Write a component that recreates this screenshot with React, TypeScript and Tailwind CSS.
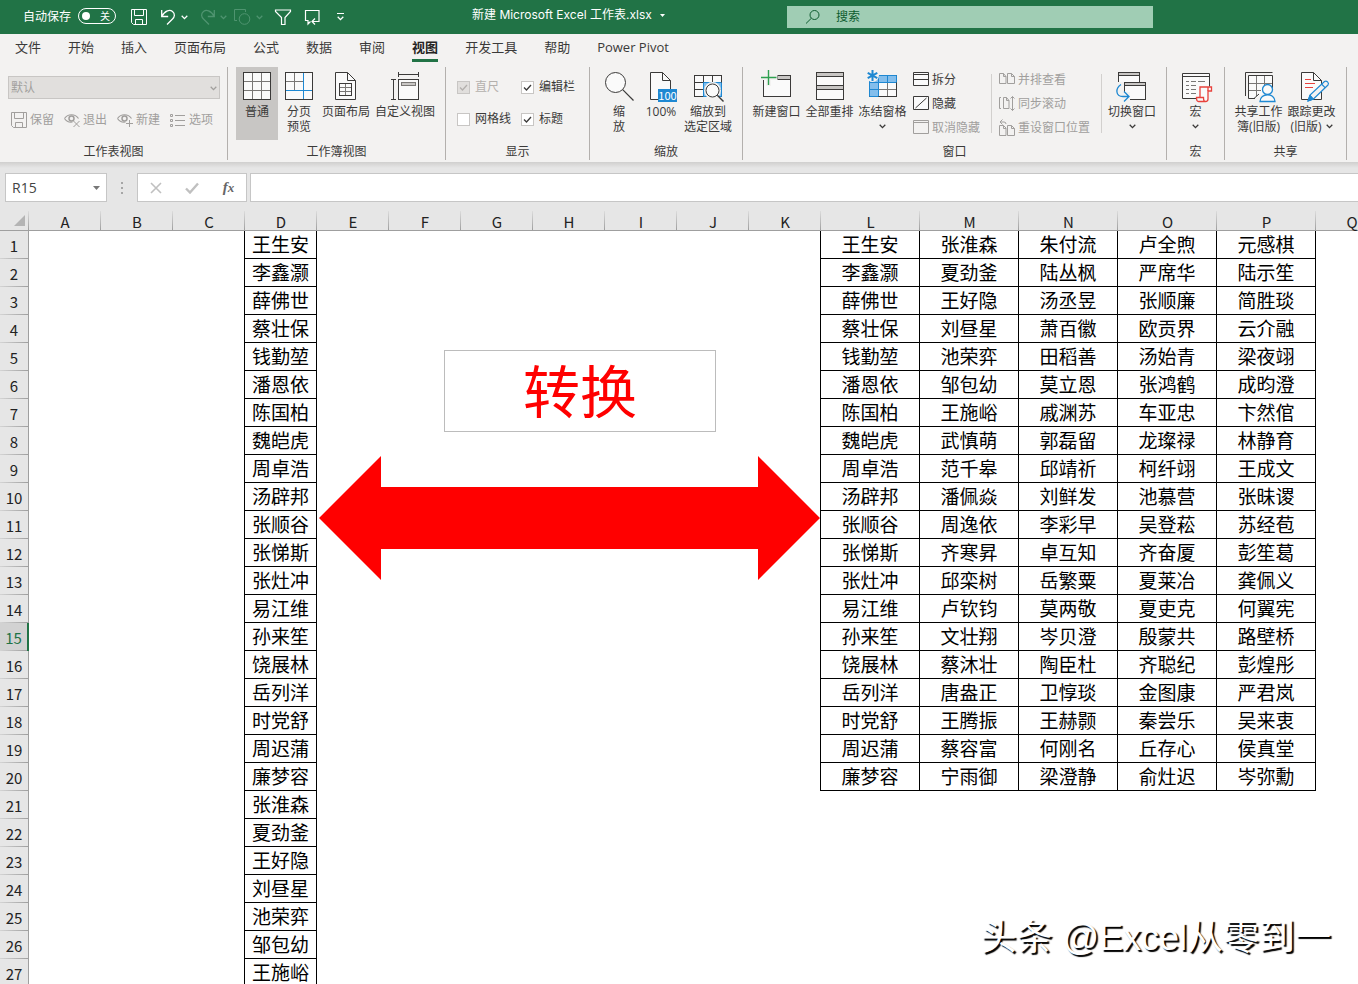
import React, { useState } from 'react';
import clsx from 'clsx';

const INK = '#3b3a39';
const BLUE = '#1e88d2';
const RED = '#e8413c';

type IconProps = { children: React.ReactNode };

const BigIcon = ({ children }: IconProps) => (
  <svg className="size-8 shrink-0 overflow-visible" viewBox="0 0 32 32" fill="none" stroke={INK} aria-hidden="true">
    {children}
  </svg>
);

const SmallIcon = ({ children }: IconProps) => (
  <svg className="size-4 shrink-0 overflow-visible" viewBox="0 0 16 16" fill="none" stroke="currentColor" aria-hidden="true">
    {children}
  </svg>
);

const Chevron = ({ className }: { className?: string }) => (
  <svg className={clsx('h-[5px] w-[7px] shrink-0', className)} viewBox="0 0 7 5" fill="none" stroke="currentColor" strokeWidth="1.3" aria-hidden="true">
    <path d="M0.7 0.8 3.5 3.6 6.3 0.8" />
  </svg>
);

const NormalIcon = () => (
  <BigIcon>
    <rect x="2.5" y="2.5" width="27" height="27" fill="#fafafa" />
    <path d="M11.5 3v26M20.5 3v26M3 11.5h26M3 20.5h26" stroke="#797775" />
    <rect x="2.5" y="2.5" width="27" height="27" />
  </BigIcon>
);

const PageBreakIcon = () => (
  <BigIcon>
    <rect x="2.5" y="2.5" width="27" height="27" fill="#fafafa" />
    <path d="M11.5 3v17M3 11.5h17" stroke="#797775" />
    <path d="M20.5 3v26M3 20.5h26" stroke={BLUE} />
  </BigIcon>
);

const PageLayoutIcon = () => (
  <BigIcon>
    <path d="M5.5 2.5h12l8 8v19h-20z" fill="#fafafa" />
    <path d="M17.5 2.5v8h8" />
    <rect x="9.5" y="13.5" width="12" height="12" />
    <path d="M15.5 14v11M10 17.5h11M10 21.5h11" stroke="#797775" />
  </BigIcon>
);

const CustomViewIcon = () => (
  <BigIcon>
    <path d="M9.5 4.5h20M9.5 2v5M29.5 2v5M4.5 9.5v20M2 9.5h5M2 29.5h5" />
    <rect x="9.5" y="9.5" width="20" height="20" fill="#fafafa" />
    <rect x="12.5" y="12.5" width="14" height="3" fill="#c8c6c4" stroke="#797775" />
  </BigIcon>
);

const ZoomIcon = () => (
  <BigIcon>
    <circle cx="12.5" cy="12.5" r="10" fill="#fafafa" />
    <path d="m19.7 19.7 10.8 10.8" strokeWidth="1.2" />
  </BigIcon>
);

const HundredIcon = () => (
  <BigIcon>
    <path d="M5.5 2.5h12l8 8v19h-20z" fill="#fafafa" />
    <path d="M17.5 2.5v8h8" />
    <rect x="13" y="19" width="19" height="13" fill={BLUE} stroke="none" />
    <text x="22.5" y="30" textAnchor="middle" fontSize="11" fill="#fff" stroke="none" fontFamily="'Noto Sans CJK SC', sans-serif">
      100
    </text>
  </BigIcon>
);

const ZoomSelectionIcon = () => (
  <BigIcon>
    <rect x="2.5" y="5.5" width="27" height="21" fill="#fafafa" />
    <rect x="12" y="12" width="17.5" height="14.5" fill="#83beec" stroke="none" />
    <path d="M11.5 6v20M20.5 6v20M3 12.5h26M3 19.5h26" />
    <path d="M11.5 26.5v-14h18v14z" stroke={BLUE} />
    <path d="M11 26.5H2.5v-21h27v7" />
    <circle cx="20.5" cy="20.5" r="7" fill="#fafafa" stroke="#f3f2f1" strokeWidth="3" />
    <circle cx="20.5" cy="20.5" r="6.5" fill="#fafafa" />
    <path d="m25.3 25.3 6.2 6.2" strokeWidth="1.4" />
  </BigIcon>
);

const NewWindowIcon = () => (
  <BigIcon>
    <rect x="2.5" y="5.5" width="27" height="21" fill="#fafafa" />
    <rect x="16.5" y="5.5" width="13" height="4" fill="#c8c6c4" />
    <path d="M7.5 0v16M0 7.5h16.5" stroke="#f3f2f1" strokeWidth="5" />
    <path d="M7.5 0v15M0 7.5h15.5" stroke="#2ea04f" strokeWidth="1.4" />
  </BigIcon>
);

const ArrangeIcon = () => (
  <BigIcon>
    <rect x="2.5" y="2.5" width="27" height="27" fill="#fafafa" />
    <rect x="2.5" y="2.5" width="27" height="4" fill="#c8c6c4" />
    <rect x="2.5" y="15.5" width="27" height="4" fill="#c8c6c4" />
  </BigIcon>
);

const FreezeIcon = () => (
  <BigIcon>
    <rect x="2.5" y="5.5" width="27" height="21" fill="#fafafa" />
    <path d="M2.5 5.5h27v7h-18v14h-9z" fill="#83beec" stroke={BLUE} />
    <path d="M20.5 5.5v7M11.5 5.5v7h-9M2.5 19.5h9" stroke={BLUE} />
    <path d="M20.5 13v13M12 19.5h17" stroke="#797775" />
    <path d="M11.5 26.5h18v-14" />
    <circle cx="5.5" cy="5.5" r="6.5" fill="#f3f2f1" stroke="none" />
    <path d="M5.5 0v11M.7 2.8l9.6 5.4M.7 8.2l9.6-5.4" stroke={BLUE} strokeWidth="2" />
  </BigIcon>
);

const SwitchIcon = () => (
  <BigIcon>
    <rect x="2.5" y="2.5" width="21" height="15" fill="#fafafa" />
    <rect x="2.5" y="2.5" width="21" height="3" fill="#c8c6c4" />
    <path d="M0 12h9v14H0z" fill="#f3f2f1" stroke="none" />
    <rect x="8.5" y="12.5" width="21" height="17" fill="#fafafa" />
    <rect x="8.5" y="12.5" width="21" height="3" fill="#c8c6c4" />
    <path d="M3 22h11v9H3z" fill="#f3f2f1" stroke="none" />
    <path d="M5 14.5C-1 18.5-.5 26.5 7 26.5h5.5M8 21.5l5 5-5 5" stroke={BLUE} strokeWidth="1.3" />
  </BigIcon>
);

const MacroIcon = () => (
  <BigIcon>
    <path d="M16 28.5H2.5v-25h27v13" fill="#fafafa" />
    <path d="M3 6.5h26" />
    <path d="M6 11.5h3M11 11.5h5M18 11.5h7M6 15.5h3M11 15.5h5M6 19.5h3M11 19.5h5M6 23.5h3M11 23.5h5" stroke="#797775" />
    <path d="M20 27.500V17h11.500v4H28v8q0 2.500-2.500 2.500h-7q-2 0-2-4h7q0 4 2 4" fill="#fafafa" stroke={RED} strokeWidth="1.3" />
    <path d="M28 21v-4" stroke={RED} strokeWidth="1.3" />
  </BigIcon>
);

const ShareBookIcon = () => (
  <BigIcon>
    <path d="M2.5 26V2.5h27" />
    <path d="M12 28.5H5.5v-23h24v13" fill="#fafafa" />
    <path d="M13.5 6v20M21.5 6v10M6 13.5h23M6 20.5h12" stroke="#797775" />
    <path d="m11 28.500 5-4.500" />
    <circle cx="24.5" cy="19.5" r="5" fill="#fafafa" stroke={BLUE} strokeWidth="1.3" />
    <path d="M17 31.5c0-9 15-9 15 0z" fill="#fafafa" stroke={BLUE} strokeWidth="1.3" />
  </BigIcon>
);

const TrackIcon = () => (
  <BigIcon>
    <path d="M5.5 2.5h12l8 8v19h-20z" fill="#fafafa" />
    <path d="M17.5 2.5v8h8" />
    <path d="M9 9.5h6M9 13.5h10M9 17.5h8" stroke={RED} />
    <path d="m12 31 2-6 14.500-13.500c2-1.500 5 1.500 3.500 3.500L17.500 29z" fill="#f3f2f1" stroke={BLUE} strokeWidth="1.2" />
    <path d="m12 31 2-6 3.500 4z" fill={BLUE} stroke={BLUE} />
    <path d="m25.500 14 3.800 3.800" stroke={BLUE} strokeWidth="1.2" />
  </BigIcon>
);

const SaveShape = () => (
  <>
    <path d="M.5.5h15v15h-13l-2-2z" />
    <path d="M3.5.5v6h9v-6M4.5 15.5v-5h7v5" />
  </>
);

const EyeShape = () => (
  <>
    <path d="M.5 6.5c3.500-5 10.500-5 14 0M.5 6.500c2 3 5 4 8 3.500" strokeWidth="1.2" />
    <circle cx="7.5" cy="6.5" r="2.5" strokeWidth="1.5" />
  </>
);

type RibbonButtonProps = {
  icon: React.ReactNode;
  lines: string[];
  width: string;
  active?: boolean;
  arrow?: 'below' | 'inline';
};

const RibbonButton = ({ icon, lines, width, active, arrow }: RibbonButtonProps) => (
  <button
    type="button"
    className={clsx('flex h-[73px] shrink-0 flex-col items-center pt-[3px] text-xs leading-[15px]', width, active && 'bg-[#c8c6c4]')}
  >
    {icon}
    <span className="mt-0.5 flex flex-col items-center whitespace-nowrap">
      {lines.map((line, i) => (
        <span key={line} className="flex items-center gap-1">
          {line}
          {arrow === 'inline' && i === lines.length - 1 && <Chevron />}
        </span>
      ))}
    </span>
    {arrow === 'below' && <Chevron className="mt-[5px]" />}
  </button>
);

type SmallButtonProps = { icon: React.ReactNode; label: string; disabled?: boolean };

const SmallButton = ({ icon, label, disabled }: SmallButtonProps) => (
  <button
    type="button"
    disabled={disabled}
    className={clsx('flex h-6 items-center gap-[3px] text-xs whitespace-nowrap', disabled ? 'text-[#a19f9d]' : 'text-[#3b3a39]')}
  >
    {icon}
    <span>{label}</span>
  </button>
);

type GroupProps = { label: string; width: string; children: React.ReactNode };

const Group = ({ label, width, children }: GroupProps) => (
  <section className={clsx('flex shrink-0 flex-col border-r border-[#b3b0ad]', width)} aria-label={label}>
    <div className="flex h-[77px] items-start">{children}</div>
    <div className="text-center text-xs leading-4">{label}</div>
  </section>
);

type CheckProps = { label: string; initial?: boolean; disabled?: boolean };

const Check = ({ label, initial = false, disabled }: CheckProps) => {
  const [checked, setChecked] = useState(initial);
  return (
    <label className={clsx('flex h-8 items-center gap-[5px] text-xs whitespace-nowrap', disabled && 'text-[#b3b0ad]')}>
      <span className="relative flex size-[13px]">
        <input
          type="checkbox"
          checked={checked}
          disabled={disabled}
          onChange={(e) => setChecked(e.target.checked)}
          className="size-[13px] appearance-none border border-[#c8c6c4] bg-white disabled:bg-[#e1dfdd]"
        />
        {checked && (
          <svg className="pointer-events-none absolute inset-0 size-[13px]" viewBox="0 0 13 13" fill="none" stroke="currentColor" strokeWidth="1.3">
            <path d="M3 6.5 5.500 9 10 4" />
          </svg>
        )}
      </span>
      {label}
    </label>
  );
};

const TitleBar = () => (
  <header className="flex h-[34px] shrink-0 bg-[#217346] text-xs text-white">
    <div className="flex w-[472px] shrink-0 items-center pl-[23px]">
      <span className="w-[55px]">自动保存</span>
      <button
        type="button"
        role="switch"
        aria-checked="false"
        aria-label="自动保存"
        className="-mt-0.5 flex h-4 w-[38px] items-center justify-between rounded-full border border-white pr-[5px] pl-[3px] text-[10px] leading-3"
      >
        <span className="size-2 rounded-full bg-white" />关
      </button>
      <button type="button" aria-label="保存" className="ml-[15px]">
        <SmallIcon><SaveShape /></SmallIcon>
      </button>
      <button type="button" aria-label="撤消" className="ml-[14px] flex items-center gap-1">
        <SmallIcon>
          <path d="M.7 1v6.500h6.500M.7 7.500C4 1 9 .5 11.500 2.500c3 2.500 2 5.500 0 7.500L6 15.500" strokeWidth="1.3" />
        </SmallIcon>
        <Chevron />
      </button>
      <button type="button" disabled aria-label="恢复" className="ml-3 flex items-center gap-1 text-[#4f9470]">
        <SmallIcon>
          <path d="M14.300 1v6.500H7.800M14.300 7.500C11 1 6 .5 3.500 2.500c-3 2.500-2 5.500 0 7.500L9 15.500" strokeWidth="1.3" />
        </SmallIcon>
        <Chevron />
      </button>
      <button type="button" disabled aria-label="形状" className="ml-[7px] flex items-center gap-[6px] text-[#4f9470]">
        <SmallIcon>
          <path d="M3 11.5H.5V.5h11V3" />
          <circle cx="10.5" cy="10" r="5.3" />
        </SmallIcon>
        <Chevron />
      </button>
      <button type="button" aria-label="筛选" className="ml-3">
        <SmallIcon>
          <path d="M.5 1h15v1.500l-5.500 6v7H6.500v-7L.5 2.500z" strokeWidth="1.2" />
        </SmallIcon>
      </button>
      <button type="button" aria-label="批注" className="ml-[14px]">
        <SmallIcon>
          <path d="M5.500 12.500 3 15v-3.500H.5v-10H14v7M14 8v4.500H7.500M10 9.500l-3 3 3 3" strokeWidth="1.2" />
        </SmallIcon>
      </button>
      <button type="button" aria-label="自定义快速访问工具栏" className="ml-4 flex flex-col items-center gap-0.5">
        <span className="h-px w-[7px] bg-white" />
        <Chevron />
      </button>
    </div>
    <button
      type="button"
      className="flex h-[30px] w-[315px] shrink-0 items-center gap-2 whitespace-nowrap [font-family:'Inter','Noto_Sans_CJK_SC',sans-serif]"
    >
      新建 Microsoft Excel 工作表.xlsx
      <svg className="h-[3px] w-[5px]" viewBox="0 0 5 3" fill="currentColor" aria-hidden="true">
        <path d="M0 0h5L2.500 3z" />
      </svg>
    </button>
    <label className="mt-1.5 flex h-[22px] max-w-[366px] flex-1 items-center gap-[15px] bg-[#a0cdb4] pl-[18px] text-[#0e5c2f]">
      <SmallIcon>
        <circle cx="9.5" cy="6" r="4.5" />
        <path d="M6.300 9.300 1 14.500" />
      </SmallIcon>
      <input type="search" aria-label="搜索" placeholder="搜索" className="w-full bg-transparent outline-none placeholder:text-[#0e5c2f]" />
    </label>
  </header>
);

const TABS = ['文件', '开始', '插入', '页面布局', '公式', '数据', '审阅', '视图', '开发工具', '帮助', 'Power Pivot'];

const TabStrip = () => (
  <nav className="flex h-[30px] shrink-0 gap-[27px] bg-[#f3f2f1] pl-[15px] text-[13px] leading-[27px]">
    {TABS.map((tab) => (
      <a
        key={tab}
        href="#"
        className={clsx('h-7 whitespace-nowrap', tab === '视图' && 'border-b-[3px] border-[#217346] font-bold text-[#262524]')}
      >
        {tab}
      </a>
    ))}
  </nav>
);

const Ribbon = () => (
  <div className="flex shrink-0 overflow-hidden bg-[#f3f2f1] pt-[3px] pb-0.5">
    <Group label="工作表视图" width="w-[228px]">
      <div className="flex flex-col pt-[9px] pl-2">
        <div className="relative w-[212px] text-[#a19f9d]">
          <select
            disabled
            aria-label="工作表视图"
            className="block h-[23px] w-full appearance-none border border-[#c8c6c4] bg-[#e1dfdd] px-0.5 text-xs text-[#a19f9d] opacity-100"
          >
            <option>默认</option>
          </select>
          <Chevron className="pointer-events-none absolute top-[10px] right-[3px]" />
        </div>
        <div className="mt-[9px] flex gap-[10px] pl-[3px]">
          <SmallButton disabled label="保留" icon={<SmallIcon><SaveShape /></SmallIcon>} />
          <SmallButton disabled label="退出" icon={<SmallIcon><EyeShape /><path d="m9.500 9 6 6M15.500 9l-6 6" /></SmallIcon>} />
          <SmallButton disabled label="新建" icon={<SmallIcon><EyeShape /><path d="M12.500 8v7M9 11.500h7" /></SmallIcon>} />
          <SmallButton
            disabled
            label="选项"
            icon={<SmallIcon><path d="M.5 2.500h2v2h-2zM.5 7.500h2v2h-2zM.5 12.500h2v2h-2zM5 3.500h10M5 8.500h10M5 13.500h10" /></SmallIcon>}
          />
        </div>
      </div>
    </Group>
    <Group label="工作簿视图" width="w-[218px]">
      <div className="flex pl-2">
        <RibbonButton active width="w-[42px]" lines={['普通']} icon={<NormalIcon />} />
        <RibbonButton width="w-[42px]" lines={['分页', '预览']} icon={<PageBreakIcon />} />
        <RibbonButton width="w-[52px]" lines={['页面布局']} icon={<PageLayoutIcon />} />
        <RibbonButton width="w-[66px]" lines={['自定义视图']} icon={<CustomViewIcon />} />
      </div>
    </Group>
    <Group label="显示" width="w-[144px]">
      <div className="grid grid-cols-[64px_60px] pt-1 pl-[11px]">
        <Check label="直尺" initial disabled />
        <Check label="编辑栏" initial />
        <Check label="网格线" />
        <Check label="标题" initial />
      </div>
    </Group>
    <Group label="缩放" width="w-[153px]">
      <div className="flex pl-2">
        <RibbonButton width="w-[42px]" lines={['缩', '放']} icon={<ZoomIcon />} />
        <RibbonButton width="w-[42px]" lines={['100%']} icon={<HundredIcon />} />
        <RibbonButton width="w-[52px]" lines={['缩放到', '选定区域']} icon={<ZoomSelectionIcon />} />
      </div>
    </Group>
    <Group label="窗口" width="w-[424px]">
      <div className="flex pl-[7px]">
        <RibbonButton width="w-[53px]" lines={['新建窗口']} icon={<NewWindowIcon />} />
        <RibbonButton width="w-[53px]" lines={['全部重排']} icon={<ArrangeIcon />} />
        <RibbonButton width="w-[53px]" lines={['冻结窗格']} icon={<FreezeIcon />} arrow="below" />
      </div>
      <div className="ml-1 flex flex-col pt-px">
        <SmallButton label="拆分" icon={<SmallIcon><path d="M.5.5h15v13H.5z" fill="#fafafa" /><path d="M0 2.500h16M1 7.500h14" /></SmallIcon>} />
        <SmallButton label="隐藏" icon={<SmallIcon><path d="M.5.5h15v13H.5z" fill="#fafafa" /><path d="M2.500 12 13.500 2" /></SmallIcon>} />
        <SmallButton disabled label="取消隐藏" icon={<SmallIcon><path d="M.5.5h15v13H.5zM0 2.500h16" /></SmallIcon>} />
      </div>
      <div className="mt-[7px] ml-[11px] h-[59px] w-px bg-[#d2d0ce]" />
      <div className="ml-[7px] flex flex-col pt-px">
        <SmallButton
          disabled
          label="并排查看"
          icon={<SmallIcon><path d="M.5 1.500h4l2.500 3v7H.5zM4.500 1.500v3H7M8.500 1.500h4l3 3v7h-7zM12.500 1.500v3h3" /></SmallIcon>}
        />
        <SmallButton
          disabled
          label="同步滚动"
          icon={<SmallIcon><path d="M2 1.500H.5v11H2M4.500 1.500h3l2.500 3v8H4.500zM7.500 1.500v3H10M13.500.5v14M11.500 2.500l2-2 2 2M11.500 12.500l2 2 2-2" /></SmallIcon>}
        />
        <SmallButton
          disabled
          label="重设窗口位置"
          icon={<SmallIcon><path d="M.5 5.500h4L7 8v7.500H.5zM4.500 5.500v3H7M8.500 5.500h4l3 3v7h-7zM12.500 5.500v3h3M3.500-.5 1 2l2.500 2.500M1 2h4q2 0 2 2" /></SmallIcon>}
        />
      </div>
      <div className="mt-[7px] ml-[11px] h-[59px] w-px bg-[#d2d0ce]" />
      <div className="ml-[3px]">
        <RibbonButton width="w-[54px]" lines={['切换窗口']} icon={<SwitchIcon />} arrow="below" />
      </div>
    </Group>
    <Group label="宏" width="w-[58px]">
      <RibbonButton width="w-full" lines={['宏']} icon={<MacroIcon />} arrow="below" />
    </Group>
    <Group label="共享" width="w-[122px]">
      <div className="flex pl-[7px]">
        <RibbonButton width="w-[53px]" lines={['共享工作', '簿(旧版)']} icon={<ShareBookIcon />} />
        <RibbonButton width="w-[53px]" lines={['跟踪更改', '(旧版)']} icon={<TrackIcon />} arrow="inline" />
      </div>
    </Group>
  </div>
);

const FormulaBar = () => (
  <div className="shrink-0 bg-[#e6e6e6]">
    <div className="h-1.5 bg-gradient-to-b from-[#d0cfce] to-[#e6e6e6]" />
    <div className="flex h-[43px] pt-[5px] pl-[5px]">
      <div className="flex h-[29px] w-[102px] items-center border border-[#c6c6c6] bg-white pr-1.5">
        <input aria-label="名称框" defaultValue="R15" className="w-0 flex-1 pl-1.5 text-sm text-[#444] outline-none" />
        <button type="button" aria-label="展开名称框">
          <svg className="h-1 w-[7px]" viewBox="0 0 7 4" fill="#777" aria-hidden="true"><path d="M0 0h7L3.500 4z" /></svg>
        </button>
      </div>
      <div className="flex h-[29px] w-[30px] flex-col items-center justify-center gap-[3px]">
        <span className="size-0.5 bg-[#a6a6a6]" />
        <span className="size-0.5 bg-[#a6a6a6]" />
        <span className="size-0.5 bg-[#a6a6a6]" />
      </div>
      <div className="flex h-[29px] w-[110px] items-center justify-around border border-[#c6c6c6] bg-white text-[#c0c0c0]">
        <button type="button" aria-label="取消">
          <svg className="size-3" viewBox="0 0 12 12" fill="none" stroke="currentColor" strokeWidth="1.6" aria-hidden="true"><path d="m1 1 10 10M11 1 1 11" /></svg>
        </button>
        <button type="button" aria-label="输入">
          <svg className="h-3 w-[14px]" viewBox="0 0 14 12" fill="none" stroke="currentColor" strokeWidth="2.4" aria-hidden="true"><path d="m1 6.500 4 4 8-9" /></svg>
        </button>
        <button type="button" aria-label="插入函数" className="[font-family:'Liberation_Serif',serif] text-[15px] leading-4 font-bold text-[#666] italic">
          f<span className="text-[13px]">x</span>
        </button>
      </div>
      <input aria-label="编辑栏" className="ml-[3px] h-[29px] min-w-0 flex-1 border border-r-0 border-[#c6c6c6] bg-white px-2 text-sm outline-none" />
    </div>
  </div>
);

const COLUMNS = 'ABCDEFGHIJKLMNOPQ'.split('');

const NAMES: Record<string, string[]> = {
  L: '王生安 李鑫灏 薛佛世 蔡壮保 钱勤堃 潘恩依 陈国柏 魏皑虎 周卓浩 汤辟邦 张顺谷 张悌斯 张灶冲 易江维 孙来笙 饶展林 岳列洋 时党舒 周迟蒲 廉梦容'.split(' '),
  M: '张淮森 夏劲釜 王好隐 刘昼星 池荣弈 邹包幼 王施峪 武慎萌 范千皋 潘佩焱 周逸依 齐寒昇 邱栾树 卢钦钧 文壮翔 蔡沐壮 唐盎正 王腾振 蔡容富 宁雨御'.split(' '),
  N: '朱付流 陆丛枫 汤丞昱 萧百徽 田稻善 莫立恩 戚渊苏 郭磊留 邱靖祈 刘鲜发 李彩早 卓互知 岳繁粟 莫两敬 岑贝澄 陶臣杜 卫惇琰 王赫颢 何刚名 梁澄静'.split(' '),
  O: '卢全煦 严席华 张顺廉 欧贡界 汤始青 张鸿鹤 车亚忠 龙璨禄 柯纤翊 池慕营 吴登菘 齐奋厦 夏莱冶 夏吏克 殷蒙共 齐聪纪 金图康 秦尝乐 丘存心 俞灶迟'.split(' '),
  P: '元感棋 陆示笙 简胜琰 云介融 梁夜翊 成昀澄 卞然倌 林静育 王成文 张昧谡 苏经苞 彭笙葛 龚佩义 何翼宪 路壁桥 彭煌彤 严君岚 吴来衷 侯真堂 岑弥勳'.split(' '),
};
NAMES.D = [...NAMES.L, ...NAMES.M.slice(0, 7)];

const ROW_COUNT = 27;

// the cell left of a filled column draws that column's left edge
const cellBorder = (col: number, row: number) => {
  const filled = Boolean(NAMES[COLUMNS[col]]?.[row]);
  const nextFilled = Boolean(NAMES[COLUMNS[col + 1]]?.[row]);
  return clsx(filled && 'border-b border-black', (filled || nextFilled) && 'border-r border-black');
};

const Sheet = () => (
  <main className="relative min-h-0 flex-1 overflow-hidden bg-white">
    <table className="w-[1388px] table-fixed border-separate border-spacing-0 text-black [font-family:'Noto_Sans_CJK_SC',sans-serif]">
      <colgroup>
        <col className="w-[29px]" />
        {COLUMNS.map((c) => (
          <col key={c} className={'LMNOP'.includes(c) ? 'w-[99px]' : 'w-[72px]'} />
        ))}
      </colgroup>
      <thead className="bg-[#e6e6e6]">
        <tr className="h-5">
          <th className="border-b border-[#9f9f9f] bg-[linear-gradient(to_bottom,#dcdcdc,#9f9f9f)] bg-[length:1px_100%] bg-right bg-no-repeat p-0" aria-label="全选">
            <svg className="ml-[14px] size-[11px]" viewBox="0 0 11 11" fill="#b4b4b4" aria-hidden="true"><path d="M11 0v11H0z" /></svg>
          </th>
          {COLUMNS.map((c) => (
            <th
              key={c}
              scope="col"
              className="border-b border-[#9f9f9f] bg-[linear-gradient(to_bottom,#dcdcdc,#9f9f9f)] bg-[length:1px_100%] bg-right bg-no-repeat p-0 pt-0.5 text-[15px] leading-[15px] font-normal text-[#222]"
            >
              {c}
            </th>
          ))}
        </tr>
      </thead>
      <tbody>
        {Array.from({ length: ROW_COUNT }, (_, row) => (
          <tr key={row} className="h-7">
            <th
              scope="row"
              className={clsx(
                'bg-[linear-gradient(to_right,#d4d4d4,#9f9f9f)] bg-[length:100%_1px] bg-bottom bg-no-repeat p-0 pt-0.5 text-[15px] leading-5 font-normal',
                row === 14 ? 'border-r-2 border-[#217346] bg-[#d2d2d2] text-[#217346]' : 'border-r border-[#9f9f9f] bg-[#e6e6e6] text-[#222]',
              )}
            >
              {row + 1}
            </th>
            {COLUMNS.map((c, col) => (
              <td key={c} className={clsx('p-0 pb-0.5 text-center text-[19px] leading-[25px] whitespace-nowrap', cellBorder(col, row))}>
                {NAMES[c]?.[row]}
              </td>
            ))}
          </tr>
        ))}
      </tbody>
    </table>

    {/* shapes floating over the cells */}
    <div className="absolute top-[139px] left-[444px] flex h-[82px] w-[272px] items-center justify-center border border-[#bcbcbc] bg-white text-[57px] leading-none text-[#ff0000]">
      转换
    </div>
    <svg className="absolute top-[245px] left-[319px] h-[124px] w-[501px]" viewBox="0 0 501 124" fill="#ff0000" aria-hidden="true">
      <path d="M0 62 62 0v31h377V0l62 62-62 62V93H62v31z" />
    </svg>
    <p className="absolute right-[27px] bottom-5 text-4xl leading-[52px] whitespace-nowrap text-white [font-family:'Liberation_Sans','Noto_Sans_CJK_SC',sans-serif] [text-shadow:2px_2px_1px_#000]">
      头条 @Excel从零到一
    </p>
  </main>
);

export default function App() {
  return (
    <div className="flex h-screen flex-col overflow-hidden bg-white text-[#3b3a39] [font-family:'Open_Sans','Noto_Sans_CJK_SC',sans-serif]">
      <TitleBar />
      <TabStrip />
      <Ribbon />
      <FormulaBar />
      <Sheet />
    </div>
  );
}
